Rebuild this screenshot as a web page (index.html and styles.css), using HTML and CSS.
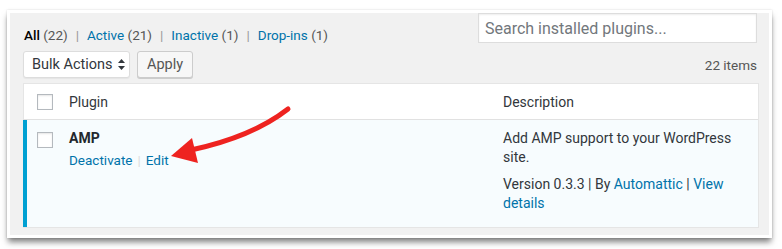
FILE: index.html
```html
<!DOCTYPE html>
<html lang="en">
<head>
    <meta charset="UTF-8">
    <title>Plugins</title>
    <link rel="stylesheet" href="styles.css">
</head>
<body>

    <div class="frame">
        <div class="wrap">

            <div class="top-bar">
                <ul class="filters">
                    <li><b class="current">All</b> <span class="count">(22)</span></li>
                    <li class="sep">|</li>
                    <li><a href="#">Active <span>(21)</span></a></li>
                    <li class="sep">|</li>
                    <li><a href="#">Inactive <span>(1)</span></a></li>
                    <li class="sep">|</li>
                    <li><a href="#">Drop-ins <span>(1)</span></a></li>
                </ul>
                <input type="search" class="search" placeholder="Search installed plugins...">
            </div>

            <div class="nav-bar">
                <div class="bulk">
                    <div class="select">
                        Bulk Actions
                        <svg width="7" height="11" viewBox="0 0 7 11"><path d="M3.5 0 L7 4 L0 4 Z M3.5 11 L7 7 L0 7 Z" fill="#32373c"/></svg>
                    </div>
                    <button class="apply">Apply</button>
                </div>
                <span class="items">22 items</span>
            </div>

            <div class="plugins">
                <div class="head">
                    <div class="cb"><span class="box"></span></div>
                    <div class="col-name">Plugin</div>
                    <div class="col-desc">Description</div>
                </div>
                <div class="plugin active">
                    <div class="cb"><span class="box"></span></div>
                    <div class="col-name">
                        <strong>AMP</strong>
                        <div class="actions"><a href="#">Deactivate</a><span class="bar">|</span><a href="#">Edit</a></div>
                    </div>
                    <div class="col-desc">
                        <p>Add AMP support to your WordPress site.</p>
                        <p>Version 0.3.3 | By <a href="#">Automattic</a> | <a href="#">View</a><br><a href="#">details</a></p>
                    </div>
                </div>
            </div>

        </div>
    </div>

    <!-- annotation arrow -->
    <svg class="arrow" width="782" height="249" viewBox="0 0 782 249">
        <path d="M288 109 Q252 137 191 150" fill="none" stroke="#ee2320" stroke-width="5" stroke-linecap="round"/>
        <path d="M171 156 L192 138 L198 163 Z" fill="#ee2320"/>
    </svg>

</body>
</html>
```

FILE: styles.css
```css
/* base */
body {
    margin: 0;
    background: #fff;
    font-family: Roboto, "Liberation Sans", sans-serif;
    color: #32373c;
    position: relative;
    width: 782px;
    height: 249px;
    overflow: hidden;
}
a {
    color: #0073aa;
    text-decoration: none;
}

/* screenshot frame */
.frame {
    margin: 10px 0 0 7px;
    width: 759px;
    padding: 3px;
    background: #fff;
    box-shadow: 0 5px 6px -1px rgba(0, 0, 0, 0.5), 0 0 2px rgba(0, 0, 0, 0.15);
}
.wrap {
    background: #f1f1f1;
    padding: 0 10px 7px 13px;
}

/* top bar */
.top-bar {
    display: flex;
    justify-content: space-between;
    align-items: flex-start;
}
.filters {
    list-style: none;
    margin: 0;
    padding: 13px 0 0 1px;
    display: flex;
    gap: 8px;
    font-size: 13.5px;
    line-height: 18px;
}
.filters .current {
    color: #000;
    font-weight: 500;
}
.filters .count,
.filters a span {
    color: #555;
}
.filters .sep {
    color: #999;
}
.search {
    width: 279px;
    height: 30px;
    box-sizing: border-box;
    margin: 0 2px 0 0;
    border: 1px solid #ddd;
    box-shadow: inset 0 1px 2px rgba(0, 0, 0, 0.07);
    background: #fff;
    padding: 0 6px;
    font-family: inherit;
    font-size: 16px;
}
.search::placeholder {
    color: #72777c;
}

/* bulk actions */
.nav-bar {
    display: flex;
    justify-content: space-between;
    align-items: center;
    margin-top: 7px;
}
.bulk {
    display: flex;
    gap: 7px;
}
.select {
    width: 107px;
    height: 27px;
    box-sizing: border-box;
    display: flex;
    align-items: center;
    gap: 5px;
    padding-left: 8px;
    background: #fff;
    border: 1px solid #ddd;
    border-radius: 3px;
    box-shadow: 0 1px 1px rgba(0, 0, 0, 0.05);
    font-size: 14.5px;
}
.apply {
    width: 56px;
    height: 27px;
    background: #f7f7f7;
    border: 1px solid #ccc;
    border-radius: 3px;
    box-shadow: 0 1px 0 #ccc;
    font-family: inherit;
    font-size: 14.5px;
    color: #555;
    padding: 0;
}
.items {
    font-size: 13.5px;
    color: #555;
    margin-right: 2px;
}

/* table */
.plugins {
    margin-top: 5px;
    background: #fff;
    border: 1px solid #e5e5e5;
    border-left: none;
}
.head,
.plugin {
    display: grid;
    grid-template-columns: 45px 434px 1fr;
}
.head {
    height: 35px;
    align-items: center;
    border-left: 1px solid #e5e5e5;
    border-bottom: 1px solid #e1e1e1;
    font-size: 14px;
}
.head .cb {
    padding-left: 13px;
}
.box {
    display: block;
    width: 16px;
    height: 16px;
    box-sizing: border-box;
    border: 1px solid #b4b9be;
    background: #fff;
    box-shadow: inset 0 1px 2px rgba(0, 0, 0, 0.1);
}
.plugin {
    grid-template-columns: 42px 434px 1fr;
    background: #f7fcfe;
    border-left: 4px solid #00a0d2;
    padding: 9px 0 14px;
    font-size: 13.5px;
    line-height: 19px;
}
.plugin .cb {
    padding: 3px 0 0 10px;
}
.plugin strong {
    display: block;
    color: #23282d;
    font-weight: 700;
    font-size: 14px;
}
.actions {
    margin-top: 3px;
}
.actions .bar {
    color: #ddd;
    margin: 0 5px;
}
.col-desc p {
    margin: 0 0 8px;
    width: 240px;
    font-size: 14px;
}
.col-desc p:last-child {
    margin-bottom: 0;
}

/* arrow overlay */
.arrow {
    position: absolute;
    left: 0;
    top: 0;
    pointer-events: none;
}
```
